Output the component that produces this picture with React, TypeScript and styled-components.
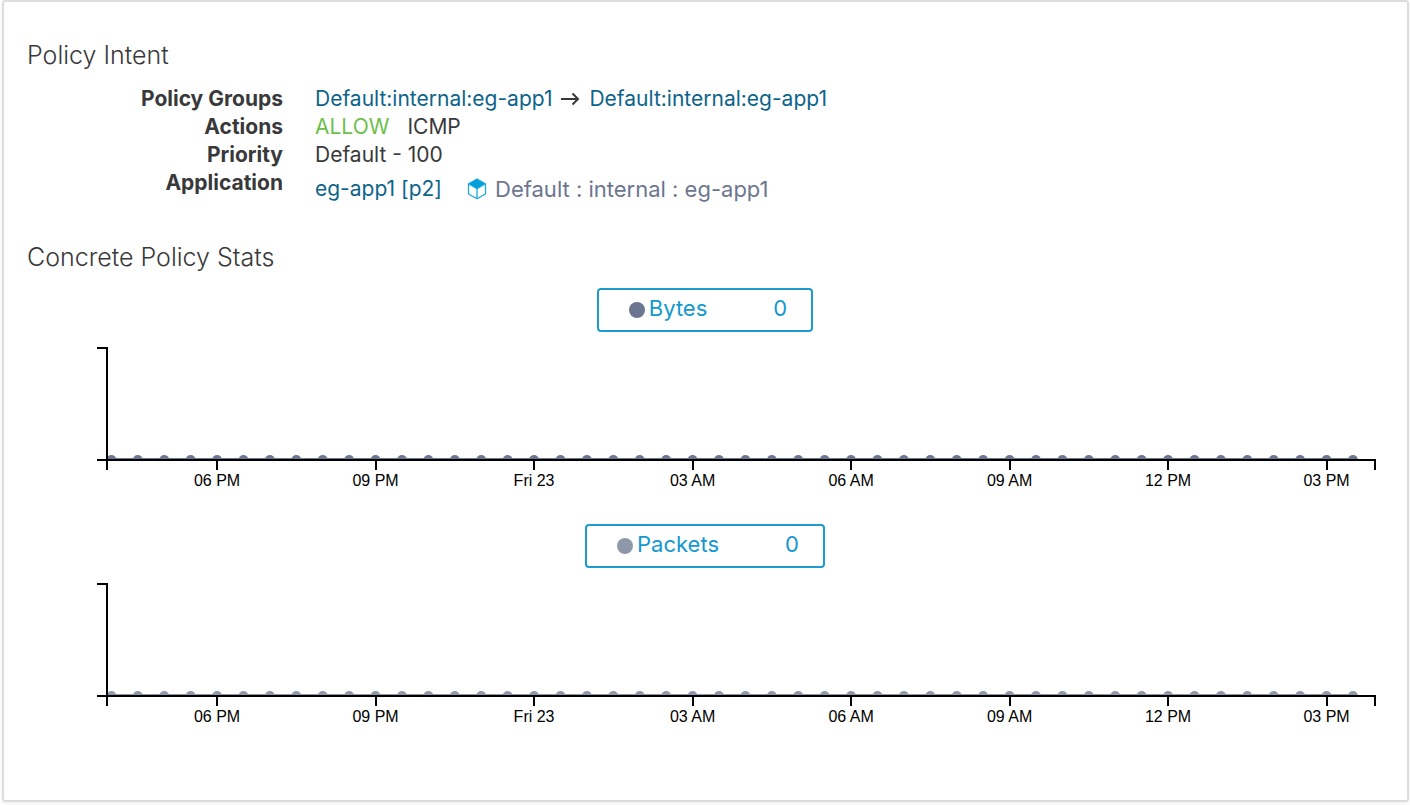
import React from "react";
import styled, { createGlobalStyle } from "styled-components";

const GlobalStyle = createGlobalStyle`
  body {
    margin: 0;
    background: #fff;
    color: #39393b;
    font-family: Inter, "Liberation Sans", sans-serif;
  }
`;

const Card = styled.main`
  box-sizing: border-box;
  margin: 0 1px 3px 2px;
  padding: 35px 24px 68px 23px;
  border: 2px solid #dcdcdc;
  border-radius: 3px;
  box-shadow: 0 2px 4px rgba(0, 0, 0, 0.06);
`;

const Heading = styled.h2`
  margin: 0;
  font-size: 25px;
  line-height: 36px;
  font-weight: 300;
`;

const Details = styled.dl`
  display: grid;
  grid-template-columns: 256px 1fr;
  column-gap: 32px;
  margin: 12px 0 30px;
  font-size: 21px;
  line-height: 28px;
`;

const Term = styled.dt`
  text-align: right;
  font-weight: 700;
`;

const Value = styled.dd<{ $tall?: boolean }>`
  display: flex;
  align-items: center;
  margin: 0;
  height: ${(p) => (p.$tall ? 40 : 28)}px;
`;

const Link = styled.a`
  color: #0d648a;
  text-decoration: none;
`;

const Arrow = styled.svg`
  width: 20px;
  height: 16px;
  margin: 0 9px 0 8px;
  fill: none;
  stroke: currentColor;
  stroke-width: 2px;
`;

const Allow = styled.span`
  margin-right: 18px;
  color: #6cc04a;
`;

const Scope = styled.span`
  display: flex;
  align-items: center;
  gap: 8px;
  margin-left: 25px;
  color: #6b7690;
  font-size: 22px;
`;

const Stat = styled.section`
  display: flex;
  flex-direction: column;
  align-items: center;
  margin-top: 13px;

  & + & {
    margin-top: 28px;
  }
`;

const Legend = styled.button`
  display: flex;
  align-items: center;
  height: 44px;
  padding: 0 24px 5px 30px;
  border: 2px solid #1e9bce;
  border-radius: 4px;
  background: #fff;
  color: #1398cf;
  font: inherit;
  font-size: 22px;
`;

const Dot = styled.span<{ $color: string }>`
  width: 16px;
  height: 16px;
  margin: 5px 4px 0 0;
  border-radius: 50%;
  background: ${(p) => p.$color};
`;

const Count = styled.span`
  margin-left: 66px;
`;

const Plot = styled.div`
  align-self: stretch;
  margin: 15px 8px 0 80px;
`;

const Chart = styled.svg`
  display: block;
  width: 100%;
  height: 149px;
  overflow: visible;
`;

const Axis = styled.g`
  stroke: #000;
  stroke-width: 2px;
  shape-rendering: crispEdges;
`;

const TickLabel = styled.text`
  font-family: "Liberation Sans", Arial, sans-serif;
  font-size: 16px;
  text-anchor: middle;
  fill: #000;
`;

const DAY = 24 * 60;
const at = (minutes: number) => `${(minutes / DAY) * 100}%`;

const TICKS = ["06 PM", "09 PM", "Fri 23", "03 AM", "06 AM", "09 AM", "12 PM", "03 PM"].map(
  (label, i) => ({ label, x: at(125 + i * 180) }),
);
const SAMPLES = Array.from({ length: 48 }, (_, i) => at(5 + i * 30));

function CubeIcon() {
  return (
    <svg width="20" height="22" viewBox="0 0 20 22" aria-hidden="true">
      <path d="M10 1 18.5 5.8 10 10.8 1.5 5.8Z" fill="#049fd9" />
      <path
        d="M10 1 18.5 5.8V16L10 20.7 1.5 16V5.8ZM1.5 5.8 10 10.8 18.5 5.8M10 10.8V20.7"
        fill="none"
        stroke="#1ea8dc"
        strokeWidth="1.3"
        strokeLinejoin="round"
      />
    </svg>
  );
}

function StatChart({ name, count, color }: { name: string; count: number; color: string }) {
  return (
    <Stat>
      <Legend type="button">
        <Dot $color={color} />
        {name}
        <Count>{count}</Count>
      </Legend>
      <Plot>
        <Chart role="img" aria-label={`${name} over the last 24 hours`}>
          <svg width="100%" height="113">
            <line x1={SAMPLES[0]} x2={SAMPLES[47]} y1="112" y2="112" stroke={color} strokeWidth="2" />
            {SAMPLES.map((x) => (
              <circle key={x} cx={x} cy="113" r="5" fill={color} />
            ))}
          </svg>
          <Axis>
            <line x1="-10" x2="0" y1="1" y2="1" />
            <line x1="0" x2="0" y1="0" y2="123" />
            <line x1="-10" x2="100%" y1="113" y2="113" />
            <line x1="100%" x2="100%" y1="112" y2="123" />
            {TICKS.map((t) => (
              <line key={t.label} x1={t.x} x2={t.x} y1="113" y2="123" />
            ))}
          </Axis>
          {TICKS.map((t) => (
            <TickLabel key={t.label} x={t.x} y="139">
              {t.label}
            </TickLabel>
          ))}
        </Chart>
      </Plot>
    </Stat>
  );
}

export default function App() {
  return (
    <>
      <GlobalStyle />
      <Card>
        <Heading>Policy Intent</Heading>
        <Details>
          <Term>Policy Groups</Term>
          <Value>
            <Link href="#consumer">Default:internal:eg-app1</Link>
            <Arrow viewBox="0 0 20 16" role="img" aria-label="to">
              <path d="M1 8H18M12.5 2.5 18 8 12.5 13.5" />
            </Arrow>
            <Link href="#provider">Default:internal:eg-app1</Link>
          </Value>
          <Term>Actions</Term>
          <Value>
            <Allow>ALLOW</Allow>
            ICMP
          </Value>
          <Term>Priority</Term>
          <Value>Default - 100</Value>
          <Term>Application</Term>
          <Value $tall>
            <Link href="#application">eg-app1 [p2]</Link>
            <Scope>
              <CubeIcon />
              Default : internal : eg-app1
            </Scope>
          </Value>
        </Details>
        <Heading>Concrete Policy Stats</Heading>
        <StatChart name="Bytes" count={0} color="#6b7690" />
        <StatChart name="Packets" count={0} color="#8f98ab" />
      </Card>
    </>
  );
}
